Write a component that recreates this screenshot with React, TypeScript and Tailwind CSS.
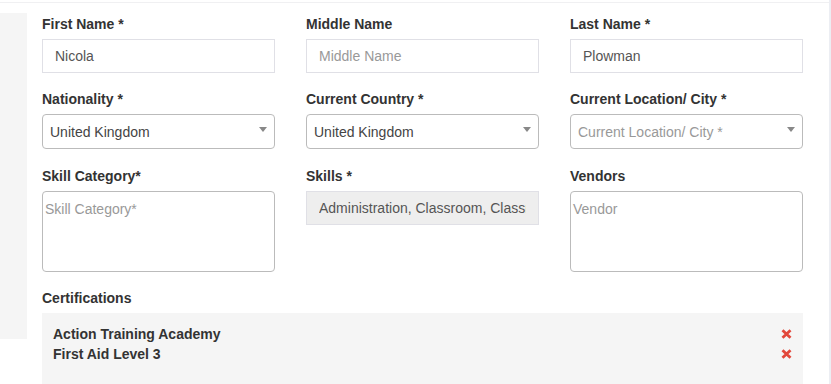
import React from 'react';

const Label: React.FC<{ children: React.ReactNode }> = ({ children }) => (
  <label className="block mb-[5px] text-[14px] leading-[20px] font-bold text-[#333]">{children}</label>
);

const TextInput: React.FC<{ value?: string; placeholder?: string; disabled?: boolean }> = ({ value, placeholder, disabled }) => (
  <input
    type="text"
    readOnly
    defaultValue={value}
    placeholder={placeholder}
    className={`block w-full h-[34px] px-[12px] text-[14px] leading-[20px] text-[#555] placeholder:text-[#999] border border-[#e0e0e6] outline-none ${
      disabled ? 'bg-[#eeeeee]' : 'bg-white'
    }`}
  />
);

const Select: React.FC<{ value?: string; placeholder?: string }> = ({ value, placeholder }) => (
  <div className="relative flex items-center h-[35px] pl-[7px] pr-[20px] border border-[#bbb] rounded-[4px] bg-white text-[14px] leading-[20px]">
    {value ? <span className="text-[#444]">{value}</span> : <span className="text-[#999]">{placeholder}</span>}
    {/* select2 style arrow */}
    <span className="absolute right-[7px] top-[12px] w-0 h-0 border-t-[5px] border-t-[#888] border-x-[4px] border-x-transparent" />
  </div>
);

const TagBox: React.FC<{ placeholder: string }> = ({ placeholder }) => (
  <div className="h-[81px] pl-[2px] pt-[7px] border border-[#bbb] rounded-[4px] bg-white text-[14px] leading-[20px] text-[#999]">
    {placeholder}
  </div>
);

const RemoveIcon = () => (
  <svg width="11" height="10" viewBox="0 0 11 10" className="block">
    <path d="M1.5 1.2 L9.5 8.8 M9.5 1.2 L1.5 8.8" stroke="#e2483b" strokeWidth="2.8" />
  </svg>
);

const certifications = ['Action Training Academy', 'First Aid Level 3'];

export default function App() {
  return (
    <div className="w-[831px] h-[384px] overflow-hidden bg-white flex font-['Liberation_Sans',Arial,sans-serif]">
      <div className="flex-1 flex flex-col">
        <div className="h-[3px] shrink-0 border-b border-[#f0f0f2]" />
        <div className="flex flex-1">
          <aside className="w-[27px] mt-[10px] h-[326px] bg-[#f5f5f5] shrink-0" />
          <main className="ml-[15px] w-[761px] pt-[11px]">
            <div className="grid grid-cols-3 gap-x-[31px]">
              <div className="mb-[16px]">
                <Label>First Name *</Label>
                <TextInput value="Nicola" />
              </div>
              <div className="mb-[16px]">
                <Label>Middle Name</Label>
                <TextInput placeholder="Middle Name" />
              </div>
              <div className="mb-[16px]">
                <Label>Last Name *</Label>
                <TextInput value="Plowman" />
              </div>

              <div className="mb-[17px]">
                <Label>Nationality *</Label>
                <Select value="United Kingdom" />
              </div>
              <div className="mb-[17px]">
                <Label>Current Country *</Label>
                <Select value="United Kingdom" />
              </div>
              <div className="mb-[17px]">
                <Label>Current Location/ City *</Label>
                <Select placeholder="Current Location/ City *" />
              </div>

              <div className="mb-[16px]">
                <Label>Skill Category*</Label>
                <TagBox placeholder="Skill Category*" />
              </div>
              <div className="mb-[16px]">
                <Label>Skills *</Label>
                <TextInput value="Administration, Classroom, Classroom Management, Coaching" disabled />
              </div>
              <div className="mb-[16px]">
                <Label>Vendors</Label>
                <TagBox placeholder="Vendor" />
              </div>
            </div>

            <Label>Certifications</Label>
            <div className="bg-[#f5f5f5] h-[80px] px-[11px] pt-[11px]">
              {certifications.map((c) => (
                <div key={c} className="flex items-center justify-between text-[14px] leading-[20px] font-bold text-[#333]">
                  <span>{c}</span>
                  <RemoveIcon />
                </div>
              ))}
            </div>
          </main>
        </div>
      </div>
      <div className="w-[2px] shrink-0 bg-[#eceef3]" />
    </div>
  );
}
